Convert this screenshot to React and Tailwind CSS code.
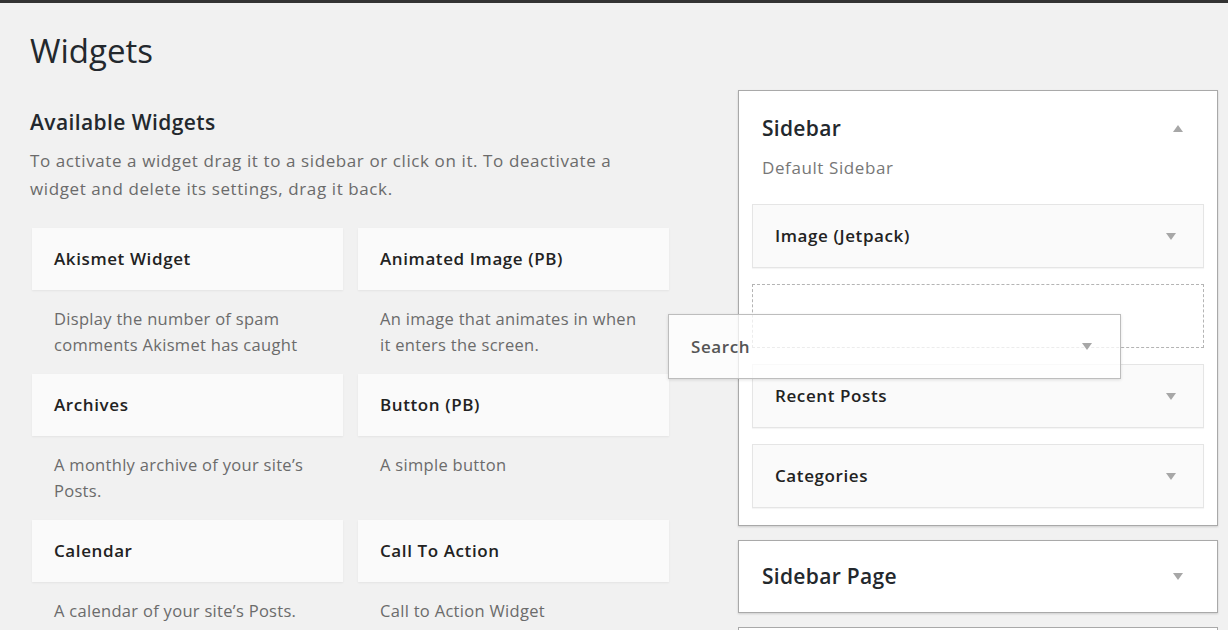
const widgets = [
  { name: 'Akismet Widget', desc: 'Display the number of spam comments Akismet has caught' },
  { name: 'Animated Image (PB)', desc: 'An image that animates in when it enters the screen.' },
  { name: 'Archives', desc: "A monthly archive of your site\u2019s Posts." },
  { name: 'Button (PB)', desc: 'A simple button' },
  { name: 'Calendar', desc: "A calendar of your site\u2019s Posts." },
  { name: 'Call To Action', desc: 'Call to Action Widget' },
];

const Arrow = ({ up }) => (
  <svg width="10" height="7" viewBox="0 0 10 7" className="shrink-0">
    <path d={up ? 'M0 7 L5 0 L10 7 Z' : 'M0 0 L10 0 L5 7 Z'} fill="#a7a7a7" />
  </svg>
);

const SidebarWidget = ({ title }) => (
  <div className="h-[64px] flex items-center justify-between pl-[22px] pr-[27px] bg-[#fafafa] border border-[#e5e5e5] shadow-[0_1px_1px_rgba(0,0,0,0.04)]">
    <span className="text-[17px] tracking-[0.6px] font-semibold text-[#222]">{title}</span>
    <Arrow />
  </div>
);

export default function App() {
  return (
    <div
      className="relative h-screen bg-[#f1f1f1] border-t-[3px] border-[#333] overflow-hidden"
      style={{ fontFamily: '"Open Sans", "Noto Sans", sans-serif' }}
    >
      <div className="pl-[30px] pr-[10px]">
        <h1 className="pt-[24px] text-[33px] leading-[48px] text-[#23282d]">Widgets</h1>

        <div className="flex mt-[15px] items-start">
          {/* Available widgets */}
          <div className="w-[641px] mt-[18px]">
            <h2 className="text-[21px] tracking-[0.4px] font-semibold leading-[28px] text-[#23282d]">Available Widgets</h2>
            <p className="mt-[11px] text-[17px] tracking-[0.6px] leading-[28px] text-[#6b6b6b]">
              To activate a widget drag it to a sidebar or click on it. To deactivate a
              <br />
              widget and delete its settings, drag it back.
            </p>
            <div className="mt-[25px] ml-[2px] grid grid-cols-[311px_311px] gap-x-[15px]">
              {widgets.map((w) => (
                <div key={w.name} className="h-[146px]">
                  <div className="h-[62px] flex items-center px-[22px] bg-[#fafafa] shadow-[0_1px_2px_rgba(0,0,0,0.06)]">
                    <span className="text-[17px] tracking-[0.6px] font-semibold text-[#222]">{w.name}</span>
                  </div>
                  <p className="pt-[16px] px-[22px] text-[16.5px] tracking-[0.3px] leading-[26px] text-[#6b6b6b]">{w.desc}</p>
                </div>
              ))}
            </div>
          </div>

          {/* Sidebars */}
          <div className="ml-auto w-[480px] flex flex-col gap-[14px]">
            <div className="bg-white border border-[#a9a9a9] shadow-[0_1px_2px_rgba(0,0,0,0.15)] px-[13px] pb-[17px]">
              <div className="flex items-center justify-between pl-[10px] pr-[21px] pt-[23px]">
                <span className="text-[21px] tracking-[0.3px] font-semibold text-[#23282d] leading-[28px]">Sidebar</span>
                <Arrow up />
              </div>
              <p className="pl-[10px] mt-[14px] text-[17px] tracking-[0.6px] text-[#777] leading-[24px]">Default Sidebar</p>
              <div className="mt-[24px] flex flex-col gap-[16px]">
                <SidebarWidget title="Image (Jetpack)" />
                <div className="h-[64px] border border-dashed border-[#b4b4b4]" />
                <SidebarWidget title="Recent Posts" />
                <SidebarWidget title="Categories" />
              </div>
            </div>
            <div className="h-[73px] bg-white border border-[#a9a9a9] shadow-[0_1px_2px_rgba(0,0,0,0.15)] flex items-center justify-between pl-[23px] pr-[34px]">
              <span className="text-[21px] tracking-[0.3px] font-semibold text-[#23282d]">Sidebar Page</span>
              <Arrow />
            </div>
            <div className="h-[60px] bg-white border border-[#a9a9a9]" />
          </div>
        </div>
      </div>

      {/* widget being dragged */}
      <div className="absolute left-[668px] top-[311px] w-[453px] h-[65px] flex items-center justify-between pl-[22px] pr-[28px] bg-white/75 border border-[#bdbdbd] shadow-[0_1px_3px_rgba(0,0,0,0.12)]">
        <span className="text-[17px] tracking-[0.6px] font-semibold text-[#555]">Search</span>
        <Arrow />
      </div>
    </div>
  );
}
